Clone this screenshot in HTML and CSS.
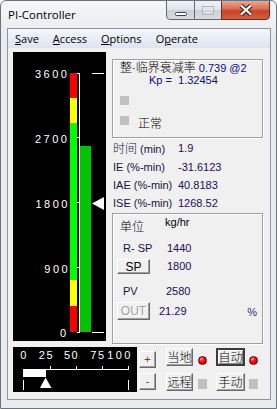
FILE: index.html
```html
<!DOCTYPE html>
<html lang="zh">
<head>
  <meta charset="UTF-8">
  <title>PI-Controller</title>
  <link rel="stylesheet" href="styles.css">
</head>
<body>
  <div class="window">
    <div class="titlebar">
      <span class="title">PI-Controller</span>
      <div class="caption-buttons">
        <span class="cap-btn cap-min">
          <svg width="27" height="18"><rect x="8.5" y="11.5" width="11" height="3" rx="1" fill="#fff" stroke="#3a4350"/></svg>
        </span>
        <span class="cap-btn cap-max">
          <svg width="26" height="18"><rect x="7.5" y="5.5" width="11" height="8" fill="none" stroke="#b3b9c1"/><rect x="9.5" y="7.5" width="7" height="4" fill="none" stroke="#e4e7eb"/></svg>
        </span>
        <span class="cap-btn cap-close">
          <svg width="47" height="18">
            <path d="M19 4.5 L29 13.5 M29 4.5 L19 13.5" stroke="#5a2418" stroke-width="4.4"/>
            <path d="M19 4.5 L29 13.5 M29 4.5 L19 13.5" stroke="#fff" stroke-width="2.2"/>
          </svg>
        </span>
      </div>
    </div>

    <div class="client">
      <div class="menubar">
        <span class="menu-item"><u>S</u>ave</span>
        <span class="menu-item"><u>A</u>ccess</span>
        <span class="menu-item"><u>O</u>ptions</span>
        <span class="menu-item">O<u>p</u>erate</span>
      </div>

      <div class="content">
        <div class="top-row">
          <!-- vertical PV / SP gauge -->
          <div class="gauge-panel">
            <svg class="gauge" width="93" height="289">
              <g class="scale-text">
                <text x="22" y="26.3">3600</text>
                <text x="22" y="91">2700</text>
                <text x="22.5" y="156">1800</text>
                <text x="31.3" y="220.7">900</text>
                <text x="47" y="284.7">0</text>
              </g>
              <rect x="57" y="21" width="7" height="25" fill="#ff0000"/>
              <rect x="57" y="46" width="7" height="25" fill="#ffff00"/>
              <rect x="57" y="71" width="7" height="157" fill="#00ff00"/>
              <rect x="57" y="228" width="7" height="26" fill="#ffff00"/>
              <rect x="57" y="254" width="7" height="26" fill="#ff0000"/>
              <rect x="66" y="21" width="1" height="260" fill="#fff"/>
              <rect x="64" y="21" width="3" height="1" fill="#fff"/>
              <rect x="64" y="85" width="3" height="1" fill="#fff"/>
              <rect x="64" y="150" width="3" height="1" fill="#fff"/>
              <rect x="64" y="215" width="3" height="1" fill="#fff"/>
              <rect x="64" y="280" width="3" height="1" fill="#fff"/>
              <rect x="67" y="94" width="11" height="186" fill="#00c400"/>
              <rect x="79" y="21" width="12" height="1" fill="#fff"/>
              <rect x="79" y="280" width="12" height="1" fill="#fff"/>
              <polygon points="79,151.5 91,145 91,158" fill="#fff"/>
            </svg>
          </div>

          <div class="side">
            <div class="group tuning">
              <div class="tune-line"><span class="zh">整</span>·<span class="zh">临界衰减率</span> <span class="blue">0.739 @2</span></div>
              <div class="tune-kp blue">Kp =&nbsp; 1.32454</div>
              <div class="flag"></div>
              <div class="flag-row">
                <div class="flag"></div>
                <span class="zh flag-text">正常</span>
              </div>
            </div>

            <div class="metrics">
              <span class="m-label"><span class="zh">时间</span> (min)</span><span class="m-value">1.9</span>
              <span class="m-label">IE (%-min)</span><span class="m-value">-31.6123</span>
              <span class="m-label">IAE (%-min)</span><span class="m-value">40.8183</span>
              <span class="m-label">ISE (%-min)</span><span class="m-value">1268.52</span>
            </div>

            <div class="group loop">
              <div class="loop-row unit-row">
                <span class="zh unit-label">单位</span>
                <span class="unit-value">kg/hr</span>
              </div>
              <div class="loop-row text-row">
                <span class="row-label">R- SP</span>
                <span class="m-value">1440</span>
              </div>
              <div class="loop-row sp-row">
                <button class="btn sp-btn">SP</button>
                <span class="m-value sp-value">1800</span>
              </div>
              <div class="loop-row text-row pv-row">
                <span class="row-label pv-label">PV</span>
                <span class="m-value">2580</span>
              </div>
              <div class="loop-row out-row">
                <button class="btn out-btn" disabled>OUT</button>
                <span class="m-value out-value">21.29</span>
                <span class="percent">%</span>
              </div>
            </div>
          </div>
        </div>

        <div class="bottom-row">
          <!-- horizontal OUT scale -->
          <div class="scale-panel">
            <svg width="124" height="45">
              <g class="out-text">
                <text x="7.3" y="12">0</text>
                <text x="25.8" y="12">25</text>
                <text x="51" y="12">50</text>
                <text x="77.3" y="12">75</text>
                <text x="94.3" y="12" class="wide">100</text>
              </g>
              <rect x="10" y="22" width="106" height="1" fill="#fff"/>
              <rect x="37" y="19" width="1" height="3" fill="#fff"/>
              <rect x="63" y="19" width="1" height="3" fill="#fff"/>
              <rect x="89" y="19" width="1" height="3" fill="#fff"/>
              <rect x="115" y="19" width="1" height="3" fill="#fff"/>
              <rect x="10" y="22" width="23" height="8" fill="#fff"/>
              <polygon points="32.5,30.5 27,41 38.5,41" fill="#fff"/>
              <rect x="10" y="33" width="1" height="10" fill="#fff"/>
              <rect x="115" y="33" width="1" height="10" fill="#fff"/>
            </svg>
          </div>

          <div class="step-buttons">
            <button class="btn step-btn">+</button>
            <button class="btn step-btn">-</button>
          </div>

          <div class="modes">
            <div class="mode-row first">
              <button class="btn mode-btn zh">当地</button>
              <span class="led on"></span>
              <button class="btn mode-btn wide default zh">自动</button>
              <span class="led on"></span>
            </div>
            <div class="mode-row second">
              <button class="btn mode-btn zh">远程</button>
              <span class="led off"></span>
              <button class="btn mode-btn wide zh">手动</button>
              <span class="led off"></span>
            </div>
          </div>
        </div>
      </div>
    </div>
  </div>
</body>
</html>
```

FILE: styles.css
```css
body {
  margin: 0;
  font-family: "Liberation Sans", "Noto Sans CJK SC", sans-serif;
  font-size: 11px;
  color: #000;
}

.zh {
  font-family: "Noto Sans CJK SC", sans-serif;
  font-size: 12px;
  font-weight: 300;
}

.window {
  box-sizing: border-box;
  width: 277px;
  height: 409px;
  border: 1px solid #6b747e;
  border-radius: 6px 6px 0 0;
  background: linear-gradient(#f5f6f8, #e8eaed 40px, #e9ebee);
  overflow: hidden;
}

/* title bar */
.titlebar {
  display: flex;
  height: 27px;
}

.title {
  font-family: "Open Sans", sans-serif;
  font-size: 11.5px;
  line-height: 16px;
  padding: 6px 0 0 7px;
}

.caption-buttons {
  display: flex;
  height: 20px;
  margin: -1px 6px 0 auto;
}

.cap-btn {
  box-sizing: border-box;
  height: 20px;
  border: 1px solid #5f6873;
  background: linear-gradient(#f1f3f6, #dfe3e8 50%, #cbd0d7 51%, #d8dce2);
}

.cap-btn svg {
  display: block;
}

.cap-min {
  width: 29px;
  border-radius: 0 0 0 4px;
}

.cap-max {
  width: 28px;
  margin-left: -1px;
}

.cap-close {
  width: 49px;
  margin-left: -1px;
  border-color: #6e2c1e;
  border-radius: 0 0 4px 0;
  background: linear-gradient(#eaa994, #d86c52 45%, #c5442a 55%, #d65e40);
}

/* client area */
.client {
  box-sizing: border-box;
  width: 264px;
  height: 372px;
  margin-left: 6px;
  border: 1px solid #8d949c;
  background: #f0f0f0;
}

.menubar {
  display: flex;
  height: 19px;
  background: linear-gradient(#f3f6fb, #dde4f1);
  font-family: "Open Sans", sans-serif;
  font-size: 11px;
}

.menu-item {
  padding: 0 7px;
  line-height: 19px;
}

.content {
  padding-left: 5px;
}

.top-row {
  display: flex;
  height: 291px;
  margin-top: 4px;
}

.gauge-panel {
  width: 93px;
  height: 289px;
  background: #000;
}

.gauge,
.scale-panel svg {
  display: block;
}

.scale-text text,
.out-text text {
  fill: #fff;
  font-family: "Liberation Sans", sans-serif;
  font-size: 11px;
  letter-spacing: 2.5px;
}

.out-text text {
  letter-spacing: 1.5px;
}

.out-text text.wide {
  letter-spacing: 2.4px;
}

.side {
  width: 151px;
  margin-left: 6px;
}

.group {
  box-sizing: border-box;
  border: 1px solid #a0a0a0;
  box-shadow: 1px 1px 0 #fff, inset 1px 1px 0 #fff;
}

.blue {
  color: #0a0a8c;
}

.tuning {
  height: 79px;
  margin-top: 7px;
}

.tune-line {
  height: 14px;
  line-height: 14px;
  padding-left: 7px;
  white-space: nowrap;
}

.tune-kp {
  height: 13px;
  line-height: 13px;
  padding-left: 36px;
}

.flag {
  width: 9px;
  height: 9px;
  margin: 9px 0 0 7px;
  background: #c0c0c0;
}

.flag-row {
  display: flex;
  margin-top: 11px;
}

.flag-row .flag {
  margin-top: 0;
}

.flag-text {
  margin-left: 9px;
  line-height: 14px;
}

.metrics {
  display: grid;
  grid-template-columns: 65px 1fr;
  margin-top: 1px;
  padding-left: 1px;
  line-height: 18px;
  color: #14143c;
}

.m-value {
  color: #240a58;
}

.loop {
  height: 131px;
  margin-top: 1px;
}

.loop-row {
  display: flex;
  align-items: flex-start;
}

.unit-row {
  height: 22px;
}

.unit-label {
  margin: 5px 0 0 7px;
  line-height: 14px;
}

.unit-value {
  margin: 1px 0 0 21px;
  line-height: 14px;
}

.text-row {
  height: 14px;
  margin-top: 5px;
  line-height: 14px;
}

.row-label {
  width: 44px;
  padding-left: 10px;
  color: #14143c;
}

.pv-row {
  margin-top: 10px;
}

.pv-label {
  width: 43px;
}

.sp-row {
  height: 15px;
  margin-top: 4px;
  line-height: 15px;
}

.out-row {
  height: 18px;
  margin-top: 4px;
  line-height: 18px;
}

.btn {
  box-sizing: border-box;
  margin: 0;
  padding: 0;
  border: 1px solid;
  border-color: #fff #696969 #696969 #fff;
  background: #f0f0f0;
  box-shadow: inset -1px -1px 0 #a0a0a0;
  font-family: "Liberation Sans", sans-serif;
  font-size: 11px;
  color: #000;
}

.sp-btn {
  width: 33px;
  height: 15px;
  margin-left: 4px;
  font-size: 12px;
  line-height: 12px;
}

.sp-value {
  margin-left: 17px;
}

.out-btn {
  width: 33px;
  height: 18px;
  margin-left: 4px;
  font-size: 12px;
  color: #a0a0a0;
  text-shadow: 1px 1px 0 #fff;
}

.out-value {
  margin-left: 9px;
}

.percent {
  margin: 1px 5px 0 auto;
  color: #1a2a8a;
}

/* bottom controls */
.bottom-row {
  display: flex;
  margin-top: 4px;
}

.scale-panel {
  width: 124px;
  height: 45px;
  background: #000;
}

.step-buttons {
  display: flex;
  flex-direction: column;
  gap: 5px;
  margin-left: 2px;
  padding-top: 4px;
}

.step-btn {
  width: 17px;
  height: 17px;
  font-size: 11px;
  line-height: 13px;
  color: #7a3a10;
}

.modes {
  margin-left: 10px;
}

.mode-row {
  display: flex;
  align-items: flex-start;
}

.mode-row.first {
  margin-top: 1px;
}

.mode-row.second {
  margin-top: 7px;
}

.mode-btn {
  width: 27px;
  height: 18px;
  font-family: "Noto Sans CJK SC", sans-serif;
  font-size: 12px;
  line-height: 14px;
}

.mode-btn.wide {
  width: 29px;
  margin-left: 9px;
}

.mode-btn.default {
  border: 2px solid;
  border-color: #3c3c3c;
  box-shadow: inset 1px 1px 0 #fff, inset -1px -1px 0 #8a8a8a;
}

.led {
  width: 9px;
  margin-left: 5px;
}

.mode-btn.wide + .led {
  margin-left: 4px;
}

.led.on {
  box-sizing: border-box;
  height: 9px;
  margin-top: 8px;
  border: 1px solid #5a0000;
  border-radius: 50%;
  background: radial-gradient(circle at 35% 30%, #ffb0b0 0, #ff1010 35%, #c00000 100%);
}

.led.off {
  height: 10px;
  margin-top: 6px;
  background: #c0c0c0;
}
```
